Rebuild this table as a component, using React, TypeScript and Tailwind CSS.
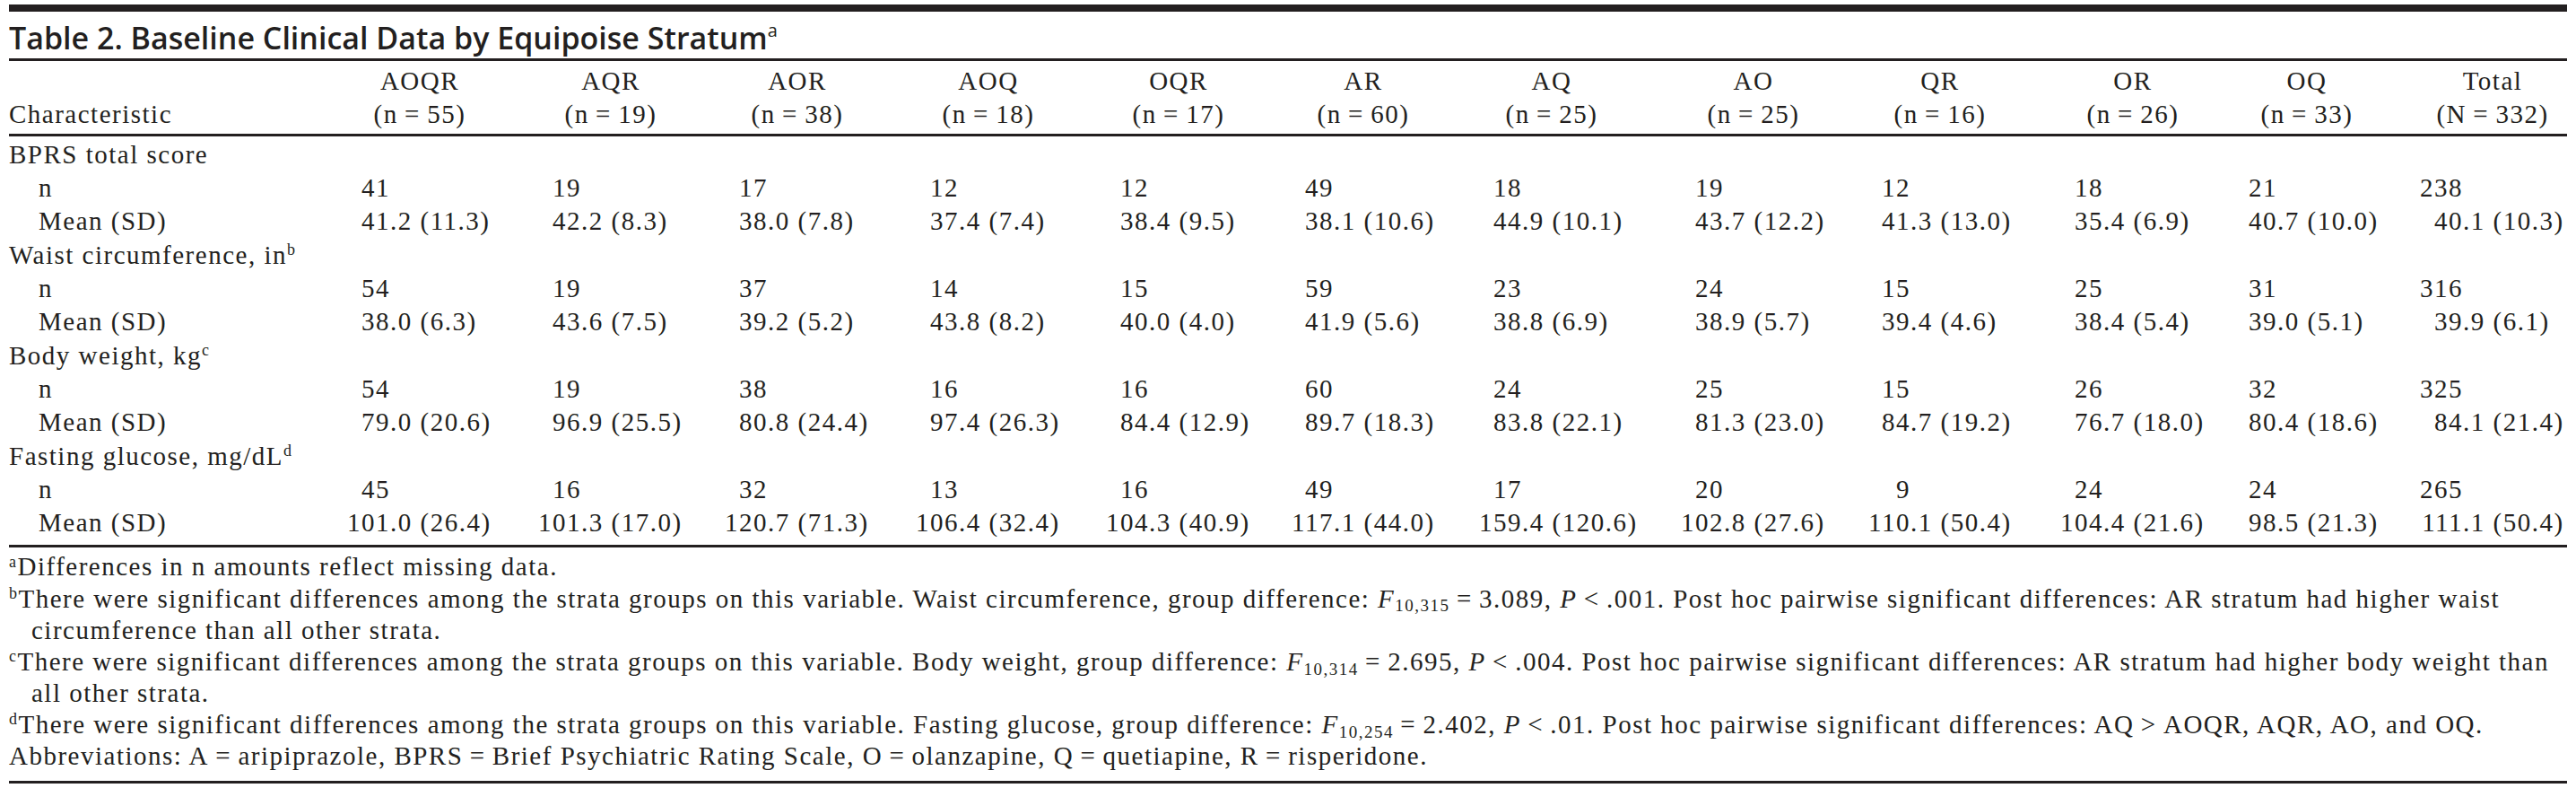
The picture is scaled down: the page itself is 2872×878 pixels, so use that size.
const columns = [
  { name: 'AOQR', n: '(n\u2009=\u200955)' },
  { name: 'AQR', n: '(n\u2009=\u200919)' },
  { name: 'AOR', n: '(n\u2009=\u200938)' },
  { name: 'AOQ', n: '(n\u2009=\u200918)' },
  { name: 'OQR', n: '(n\u2009=\u200917)' },
  { name: 'AR', n: '(n\u2009=\u200960)' },
  { name: 'AQ', n: '(n\u2009=\u200925)' },
  { name: 'AO', n: '(n\u2009=\u200925)' },
  { name: 'QR', n: '(n\u2009=\u200916)' },
  { name: 'OR', n: '(n\u2009=\u200926)' },
  { name: 'OQ', n: '(n\u2009=\u200933)' },
  { name: 'Total', n: '(N\u2009=\u2009332)' },
];

type Section = {
  label: string;
  note?: string;
  n: string[];
  mean: string[];
};

const sections: Section[] = [
  {
    label: 'BPRS total score',
    n: ['41', '19', '17', '12', '12', '49', '18', '19', '12', '18', '21', '238'],
    mean: ['41.2 (11.3)', '42.2 (8.3)', '38.0 (7.8)', '37.4 (7.4)', '38.4 (9.5)', '38.1 (10.6)', '44.9 (10.1)', '43.7 (12.2)', '41.3 (13.0)', '35.4 (6.9)', '40.7 (10.0)', '40.1 (10.3)'],
  },
  {
    label: 'Waist circumference, in',
    note: 'b',
    n: ['54', '19', '37', '14', '15', '59', '23', '24', '15', '25', '31', '316'],
    mean: ['38.0 (6.3)', '43.6 (7.5)', '39.2 (5.2)', '43.8 (8.2)', '40.0 (4.0)', '41.9 (5.6)', '38.8 (6.9)', '38.9 (5.7)', '39.4 (4.6)', '38.4 (5.4)', '39.0 (5.1)', '39.9 (6.1)'],
  },
  {
    label: 'Body weight, kg',
    note: 'c',
    n: ['54', '19', '38', '16', '16', '60', '24', '25', '15', '26', '32', '325'],
    mean: ['79.0 (20.6)', '96.9 (25.5)', '80.8 (24.4)', '97.4 (26.3)', '84.4 (12.9)', '89.7 (18.3)', '83.8 (22.1)', '81.3 (23.0)', '84.7 (19.2)', '76.7 (18.0)', '80.4 (18.6)', '84.1 (21.4)'],
  },
  {
    label: 'Fasting glucose, mg/dL',
    note: 'd',
    n: ['45', '16', '32', '13', '16', '49', '17', '20', '9', '24', '24', '265'],
    mean: ['101.0 (26.4)', '101.3 (17.0)', '120.7 (71.3)', '106.4 (32.4)', '104.3 (40.9)', '117.1 (44.0)', '159.4 (120.6)', '102.8 (27.6)', '110.1 (50.4)', '104.4 (21.6)', '98.5 (21.3)', '111.1 (50.4)'],
  },
];

const gridCols =
  'grid grid-cols-[393px_213px_208px_213px_212px_206px_210px_225px_208px_215px_194px_207px_1fr]';

// decimal-aligned value: integer part sits right-aligned in a two-digit box
function NumCell({ value }: { value: string }) {
  const dot = value.indexOf('.');
  const head = dot === -1 ? value : value.slice(0, dot);
  const tail = dot === -1 ? '' : value.slice(dot);
  return (
    <div className="flex whitespace-nowrap">
      <span className="flex w-[32px] shrink-0 justify-end">{head}</span>
      <span>{tail}</span>
    </div>
  );
}

function DataRow({ label, values }: { label: string; values: string[] }) {
  return (
    <div className={gridCols}>
      <div className="pl-[33px] whitespace-nowrap">{label}</div>
      {values.map((v, i) => (
        <NumCell key={i} value={v} />
      ))}
    </div>
  );
}

function Sup({ children }: { children: string }) {
  return <sup className="text-[18px] top-[-0.55em]">{children}</sup>;
}

function Stat({ df, f, p }: { df: string; f: string; p: string }) {
  return (
    <>
      <i>F</i>
      <sub className="text-[19px]">{df}</sub>
      {'\u2009=\u2009' + f + ', '}
      <i>P</i>
      {'\u2009<\u2009' + p + '.'}
    </>
  );
}

export default function App() {
  return (
    <div className="min-h-screen bg-white px-[10px] pt-[5px] text-[#231f20] font-['Liberation_Serif','Times_New_Roman',serif] text-[29px] tracking-[1.5px]">
      <div className="h-[8px] bg-[#231f20]" />
      <h1 className="mt-[6px] whitespace-nowrap font-['Open_Sans','Noto_Sans',sans-serif] text-[34px] leading-[46px] font-semibold tracking-normal">
        Table 2. Baseline Clinical Data by Equipoise Stratum
        <sup className="text-[20px] font-normal top-[-0.7em]">a</sup>
      </h1>
      <div className="h-[3px] bg-[#231f20]" />

      <div className={`${gridCols} pt-[4px] pb-[3px] leading-[37px]`}>
        <div className="flex flex-col justify-end">Characteristic</div>
        {columns.map((c) => (
          <div key={c.name} className="w-[130px] text-center whitespace-nowrap">
            <div>{c.name}</div>
            <div>{c.n}</div>
          </div>
        ))}
      </div>
      <div className="h-[3px] bg-[#231f20]" />

      <div className="pt-[1.5px] pb-[5px] leading-[37.36px]">
        {sections.map((s) => (
          <div key={s.label}>
            <div className="whitespace-nowrap">
              {s.label}
              {s.note ? <Sup>{s.note}</Sup> : null}
            </div>
            <DataRow label="n" values={s.n} />
            <DataRow label="Mean (SD)" values={s.mean} />
          </div>
        ))}
      </div>
      <div className="h-[3px] bg-[#231f20]" />

      <div className="pt-[4.6px] pb-[9px] leading-[35.17px] whitespace-nowrap">
        <div>
          <Sup>a</Sup>Differences in n amounts reflect missing data.
        </div>
        <div>
          <Sup>b</Sup>There were significant differences among the strata groups on this variable. Waist circumference, group
          difference: <Stat df="10,315" f="3.089" p=".001" /> Post hoc pairwise significant differences: AR stratum had higher
          waist
        </div>
        <div className="pl-[25px]">circumference than all other strata.</div>
        <div>
          <Sup>c</Sup>There were significant differences among the strata groups on this variable. Body weight, group difference:{' '}
          <Stat df="10,314" f="2.695" p=".004" /> Post hoc pairwise significant differences: AR stratum had higher body weight than
        </div>
        <div className="pl-[25px]">all other strata.</div>
        <div>
          <Sup>d</Sup>There were significant differences among the strata groups on this variable. Fasting glucose, group
          difference: <Stat df="10,254" f="2.402" p=".01" /> Post hoc pairwise significant differences: AQ{'\u2009>\u2009'}AOQR,
          AQR, AO, and OQ.
        </div>
        <div>
          Abbreviations: A{'\u2009=\u2009'}aripiprazole, BPRS{'\u2009=\u2009'}Brief Psychiatric Rating Scale, O{'\u2009=\u2009'}
          olanzapine, Q{'\u2009=\u2009'}quetiapine, R{'\u2009=\u2009'}risperidone.
        </div>
      </div>
      <div className="h-[3px] bg-[#231f20]" />
    </div>
  );
}
